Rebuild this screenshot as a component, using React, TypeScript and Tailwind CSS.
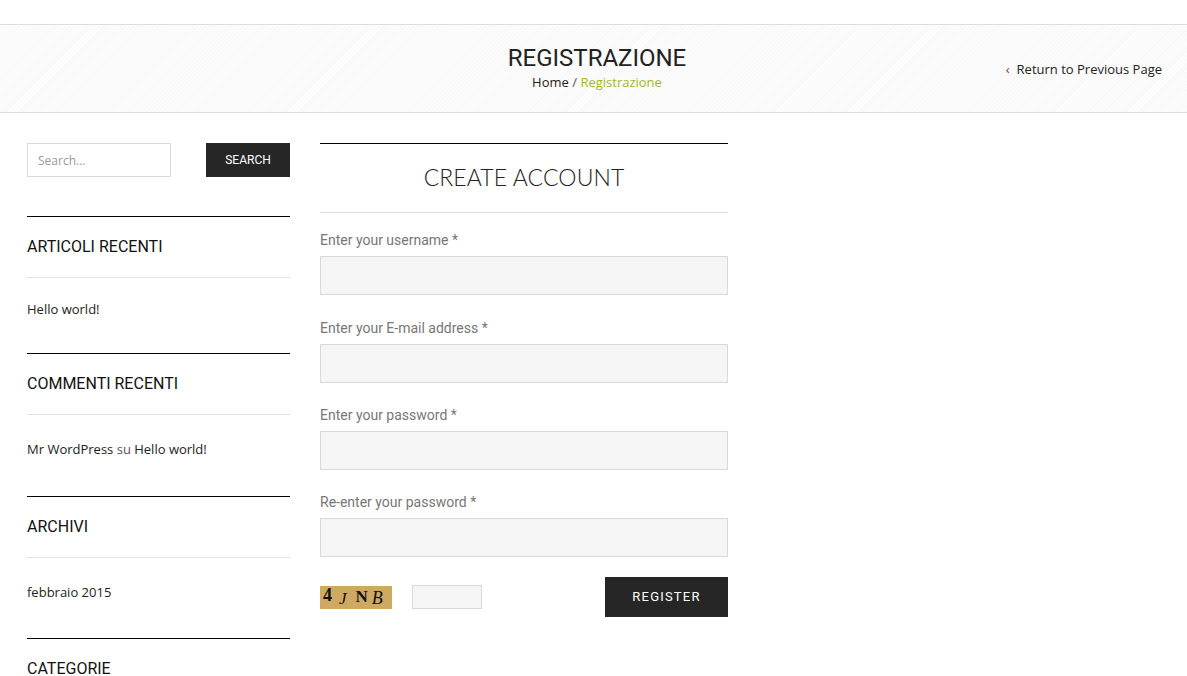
import React from 'react';

const widgets = [
  { title: 'ARTICOLI RECENTI', body: <span>Hello world!</span>, list: 'pt-[22px] pb-[35px]' },
  {
    title: 'COMMENTI RECENTI',
    body: (
      <span>
        Mr WordPress <span className="text-[#555]">su</span> Hello world!
      </span>
    ),
    list: 'pt-[25px] pb-[38px]',
  },
  { title: 'ARCHIVI', body: <span>febbraio 2015</span>, list: 'pt-[25px] pb-[37px]' },
  { title: 'CATEGORIE', body: null, list: '' },
];

const fields = [
  'Enter your username',
  'Enter your E-mail address',
  'Enter your password',
  'Re-enter your password',
];

function Sidebar() {
  return (
    <aside className="w-[263px] shrink-0 pt-[30px]">
      {/* search */}
      <form className="flex justify-between" onSubmit={(e) => e.preventDefault()}>
        <input
          type="text"
          placeholder="Search..."
          className="h-[34px] w-[144px] border border-[#d9d9d9] bg-white px-[10px] font-['Open_Sans'] text-[12px] text-[#333] outline-none placeholder:text-[#999]"
        />
        <button
          type="submit"
          className="h-[34px] w-[84px] bg-[#262626] font-['Roboto'] text-[12px] text-white"
        >
          SEARCH
        </button>
      </form>

      <div className="mt-[39px]">
        {widgets.map((w) => (
          <section key={w.title} className="border-t border-black">
            <h3 className="flex h-[61px] items-center border-b border-[#e2e2e2] pb-[1px] font-['Roboto'] text-[16px] text-[#111]">
              {w.title}
            </h3>
            {w.body && (
              <ul className={`${w.list} font-['Open_Sans'] text-[13px] text-[#222]`}>
                <li className="leading-[18px]">{w.body}</li>
              </ul>
            )}
          </section>
        ))}
      </div>
    </aside>
  );
}

function Captcha() {
  return (
    <div className="flex h-[23px] w-[72px] items-center bg-[#cfa862] pl-[3px] font-['Liberation_Serif',serif] text-[#111]">
      <span className="-mt-[3px] text-[18px] font-bold">4</span>
      <span className="ml-[7px] mt-[3px] text-[17px] italic">J</span>
      <span className="ml-[9px] text-[17px] font-bold">N</span>
      <span className="ml-[4px] mt-[3px] text-[18px] italic">B</span>
    </div>
  );
}

function RegisterForm() {
  return (
    <main className="ml-[30px] w-[408px] pt-[30px]">
      <div className="border-t border-black">
        <h2 className="flex h-[69px] items-center justify-center border-b border-[#e2e2e2] pb-[2px] font-['Lato'] text-[23px] font-light tracking-[0.1px] text-[#222]">
          CREATE ACCOUNT
        </h2>
      </div>
      <form className="pt-[17px]" onSubmit={(e) => e.preventDefault()}>
        {fields.map((f, i) => (
          <div key={f} className={i === 0 ? 'mb-[23px]' : 'mb-[22px]'}>
            <label className="block h-[26px] font-['Roboto'] text-[14px] leading-[20px] text-[#777]">
              {f} *
            </label>
            <input
              type={f.includes('password') ? 'password' : 'text'}
              className="block h-[39px] w-full border border-[#d9d9d9] bg-[#f5f5f5] outline-none"
            />
          </div>
        ))}
        <div className="-mt-[2px] flex items-center justify-between">
          <div className="flex items-center gap-[20px]">
            <Captcha />
            <input
              type="text"
              className="h-[24px] w-[70px] border border-[#d9d9d9] bg-[#f5f5f5] outline-none"
            />
          </div>
          <button
            type="submit"
            className="h-[40px] w-[123px] bg-[#262626] font-['Roboto'] text-[13px] tracking-[1.2px] text-white"
          >
            REGISTER
          </button>
        </div>
      </form>
    </main>
  );
}

export default function App() {
  return (
    <div className="min-h-[676px] bg-white">
      <div className="h-[24px]" />
      <header className="relative flex h-[89px] flex-col items-center border-y border-[#dedede] bg-[repeating-linear-gradient(135deg,#fcfcfc_0px,#fcfcfc_2px,#f8f8f8_2px,#f8f8f8_3px)] pl-[7px] pt-[17px]">
        <h1 className="font-['Roboto'] text-[24px] leading-[32px] text-[#222]">REGISTRAZIONE</h1>
        <nav className="-mt-[1px] font-['Open_Sans'] text-[13px] leading-[18px]">
          <span className="text-[#2a1a10]">Home</span>
          <span className="text-[#555]"> / </span>
          <span className="text-[#a3b81c]">Registrazione</span>
        </nav>
        <a className="absolute right-[25px] top-[35px] flex items-center gap-[7px] font-['Open_Sans'] text-[13px] text-[#222]">
          <span className="text-[#8a3a1a]">‹</span>
          Return to Previous Page
        </a>
      </header>
      <div className="flex px-[27px]">
        <Sidebar />
        <RegisterForm />
      </div>
    </div>
  );
}
